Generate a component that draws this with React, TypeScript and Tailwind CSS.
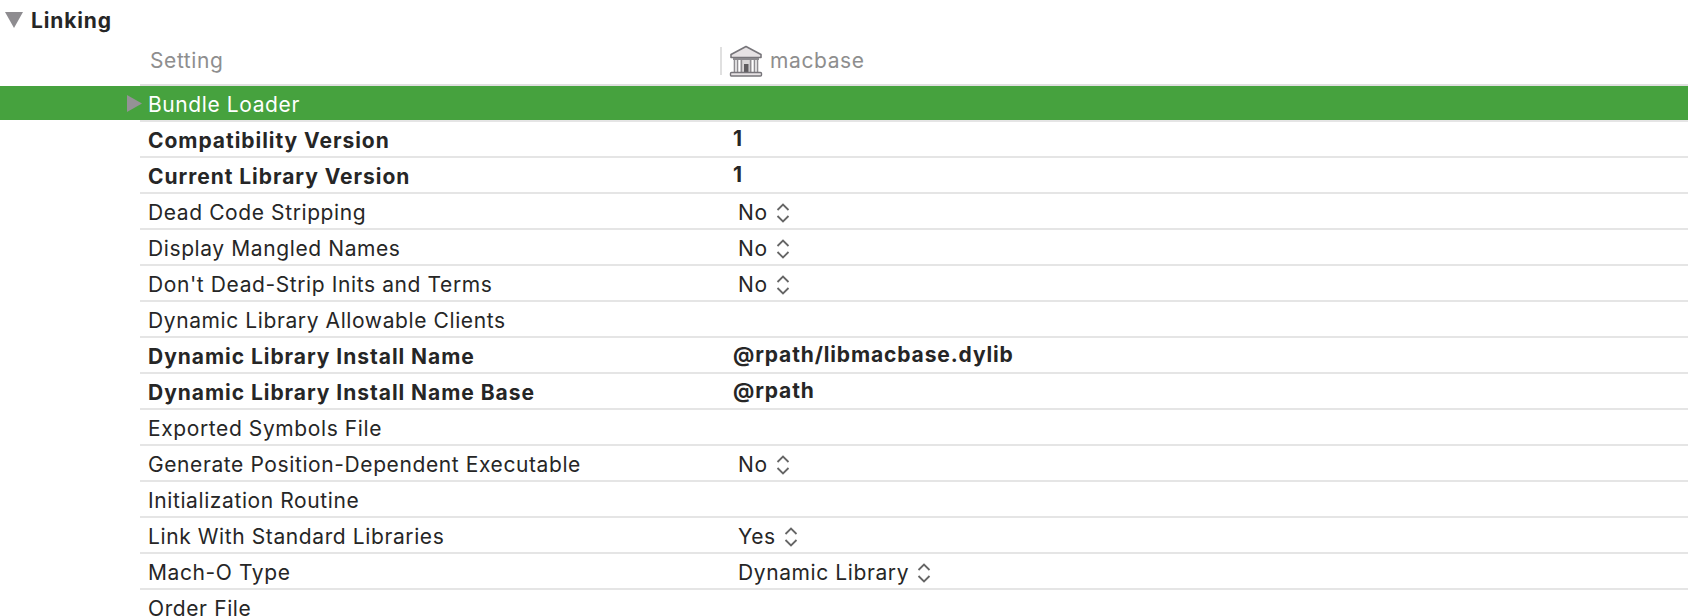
type Row = { label: string; value?: string; bold?: boolean; popup?: boolean };

const rows: Row[] = [
  { label: "Compatibility Version", value: "1", bold: true },
  { label: "Current Library Version", value: "1", bold: true },
  { label: "Dead Code Stripping", value: "No", popup: true },
  { label: "Display Mangled Names", value: "No", popup: true },
  { label: "Don't Dead-Strip Inits and Terms", value: "No", popup: true },
  { label: "Dynamic Library Allowable Clients" },
  { label: "Dynamic Library Install Name", value: "@rpath/libmacbase.dylib", bold: true },
  { label: "Dynamic Library Install Name Base", value: "@rpath", bold: true },
  { label: "Exported Symbols File" },
  { label: "Generate Position-Dependent Executable", value: "No", popup: true },
  { label: "Initialization Routine" },
  { label: "Link With Standard Libraries", value: "Yes", popup: true },
  { label: "Mach-O Type", value: "Dynamic Library", popup: true },
  { label: "Order File" },
];

function Stepper() {
  return (
    <svg width="16" height="22" viewBox="0 0 16 22" fill="none" stroke="#666666" strokeWidth="1.8" className="ml-[7px] shrink-0">
      <path d="M2.5 8 L8 2.5 L13.5 8" />
      <path d="M2.5 14 L8 19.5 L13.5 14" />
    </svg>
  );
}

function BankIcon() {
  return (
    <svg width="34" height="32" viewBox="0 0 34 32" className="shrink-0">
      <path d="M17 1.5 L32 9.5 V12.5 H2 V9.5 Z" fill="#e6e2e4" stroke="#77757a" strokeWidth="1.6" strokeLinejoin="round" />
      <rect x="4" y="13" width="26" height="2" fill="#8b898d" />
      <path d="M5.5 15 V27 M8.5 15 V27 M25.5 15 V27 M28.5 15 V27" stroke="#8f8d91" strokeWidth="1.6" />
      <rect x="11" y="15" width="12" height="12" fill="#d9d6d8" />
      <path d="M12.5 15 V27 M21.5 15 V27" stroke="#8f8d91" strokeWidth="1.4" />
      <rect x="15" y="19" width="4.5" height="8" fill="#5f5c60" />
      <rect x="1.5" y="27.5" width="31" height="3.5" rx="1" fill="#e6e2e4" stroke="#77757a" strokeWidth="1.4" />
    </svg>
  );
}

function SettingRow({ row }: { row: Row }) {
  return (
    <div className="ml-[140px] flex h-[36px] shrink-0 items-center border-b-2 border-[#e5e5e5] text-[21px] tracking-[0.6px] text-[#262626]">
      <span className={row.bold ? "w-[585px] pt-[3px] pl-[8px] font-bold tracking-[0.96px]" : "w-[585px] pt-[3px] pl-[8px]"}>
        {row.label}
      </span>
      {row.value &&
        (row.bold ? (
          <span className="ml-[8px] -mt-[1px] font-bold tracking-[0.87px]">{row.value}</span>
        ) : (
          <span className="ml-[13px] flex items-center pt-[3px]">
            {row.value}
            {row.popup && <Stepper />}
          </span>
        ))}
    </div>
  );
}

export default function App() {
  return (
    <div className="h-[616px] w-[1688px] overflow-hidden bg-white font-['Inter',sans-serif] antialiased">
      {/* Section title */}
      <div className="flex h-[40px] items-center pl-[5px]">
        <svg width="18" height="16" viewBox="0 0 18 16" className="shrink-0">
          <path d="M0 0 H18 L9 16 Z" fill="#8e8c90" />
        </svg>
        <span className="ml-[8px] pt-[1px] text-[21px] font-bold tracking-[0.87px] text-[#262626]">Linking</span>
      </div>

      {/* Column headers */}
      <div className="ml-[140px] flex h-[46px] items-center border-b-2 border-[#e0e0e0] pb-[2px] text-[21px] tracking-[0.6px] text-[#8e8e8e]">
        <span className="w-[580px] pl-[10px]">Setting</span>
        <div className="flex h-[28px] items-center border-l-2 border-[#e0e0e0] pl-[7px]">
          <BankIcon />
          <span className="ml-[7px]">macbase</span>
        </div>
      </div>

      {/* Selected row */}
      <div className="flex h-[34px] items-center bg-[#46a23e] pl-[127px] text-[21px] tracking-[0.6px] text-white">
        <svg width="15" height="17" viewBox="0 0 15 17" className="shrink-0">
          <path d="M0 0 L15 8.5 L0 17 Z" fill="#949296" />
        </svg>
        <span className="ml-[6px] pt-[3px]">Bundle Loader</span>
      </div>
      <div className="ml-[140px] h-[2px] bg-[#e5e5e5]" />

      {rows.map((row) => (
        <SettingRow key={row.label} row={row} />
      ))}
    </div>
  );
}
